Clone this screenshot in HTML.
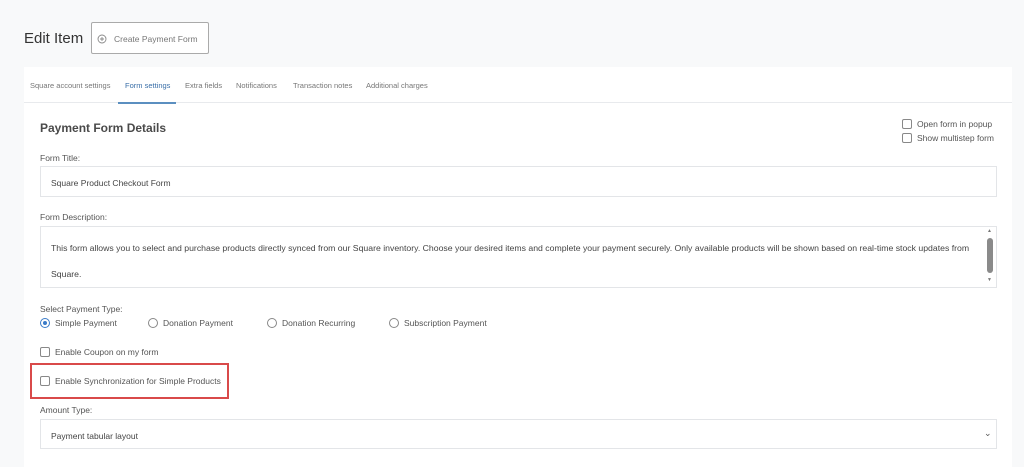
<!DOCTYPE html>
<html><head><style>
*{box-sizing:border-box;margin:0;padding:0}
body{width:1024px;height:465px;background:#f8f9fa;font-family:"Liberation Sans",sans-serif;color:#444;position:relative;overflow:hidden}
.a{position:absolute}
.panel{left:24px;top:67px;width:988px;height:400px;background:#fff}
.tabs{left:24px;top:67px;width:988px;height:36px;border-bottom:1px solid #e8eaed}
.tab{top:81px;font-size:7.5px;color:#777}
.lbl{font-size:8.5px;color:#555}
.inp{left:40px;width:957px;border:1px solid #e3e5e8;background:#fff;font-size:8.5px;color:#444}
.cb{width:10px;height:10px;border:1px solid #888;border-radius:2px;background:#fff}
.rd{width:10px;height:10px;border:1px solid #888;border-radius:50%;background:#fff}
</style></head><body>
<div class="a" style="left:24px;top:30px;font-size:15px;color:#333">Edit Item</div>
<div class="a" style="left:91px;top:22px;width:118px;height:32px;border:1px solid #aaa;background:#fff;border-radius:2px;font-size:8.5px;color:#777;padding:11px 0 0 22px">Create Payment Form</div>
<svg class="a" style="left:97px;top:34px" width="10" height="10" viewBox="0 0 10 10"><circle cx="5" cy="5" r="4" fill="none" stroke="#888" stroke-width="0.9"/><path d="M5 3v4M3 5h4" stroke="#888" stroke-width="0.9"/></svg>
<div class="a panel"></div>
<div class="a tabs"></div>
<div class="a tab" style="left:30px">Square account settings</div>
<div class="a tab" style="left:125px;color:#3a6fa8">Form settings</div>
<div class="a" style="left:118px;top:102px;width:58px;height:2px;background:#5b8fc0"></div>
<div class="a tab" style="left:185px">Extra fields</div>
<div class="a tab" style="left:236px">Notifications</div>
<div class="a tab" style="left:293px">Transaction notes</div>
<div class="a tab" style="left:366px">Additional charges</div>
<div class="a" style="left:40px;top:121px;font-size:12px;font-weight:bold;color:#4a4a4a">Payment Form Details</div>
<div class="a cb" style="left:902px;top:119px"></div><div class="a lbl" style="left:917px;top:119px">Open form in popup</div>
<div class="a cb" style="left:902px;top:133px"></div><div class="a lbl" style="left:917px;top:133px">Show multistep form</div>
<div class="a lbl" style="left:40px;top:153px">Form Title:</div>
<div class="a inp" style="top:166px;height:31px;padding:11px 10px">Square Product Checkout Form</div>
<div class="a lbl" style="left:40px;top:212px">Form Description:</div>
<div class="a inp" style="top:226px;height:62px;padding:8px 14px 0 10px;line-height:26px;font-size:8.7px">This form allows you to select and purchase products directly synced from our Square inventory. Choose your desired items and complete your payment securely. Only available products will be shown based on real-time stock updates from Square.</div>
<div class="a" style="left:987px;top:238px;width:6px;height:35px;background:#8a8a8a;border-radius:3px"></div>
<div class="a" style="left:987px;top:228px;font-size:5px;color:#777">▲</div>
<div class="a" style="left:987px;top:277px;font-size:5px;color:#777">▼</div>
<div class="a lbl" style="left:40px;top:304px">Select Payment Type:</div>
<div class="a rd" style="left:40px;top:318px;border-color:#3a7bc8"></div><div class="a" style="left:43px;top:321px;width:4px;height:4px;border-radius:50%;background:#3a7bc8"></div>
<div class="a lbl" style="left:55px;top:318px">Simple Payment</div>
<div class="a rd" style="left:148px;top:318px"></div><div class="a lbl" style="left:163px;top:318px">Donation Payment</div>
<div class="a rd" style="left:267px;top:318px"></div><div class="a lbl" style="left:282px;top:318px">Donation Recurring</div>
<div class="a rd" style="left:389px;top:318px"></div><div class="a lbl" style="left:404px;top:318px">Subscription Payment</div>
<div class="a cb" style="left:40px;top:347px"></div><div class="a lbl" style="left:55px;top:347px">Enable Coupon on my form</div>
<div class="a" style="left:30px;top:363px;width:199px;height:36px;border:2px solid #d94a4a"></div>
<div class="a cb" style="left:40px;top:376px"></div><div class="a lbl" style="left:55px;top:376px">Enable Synchronization for Simple Products</div>
<div class="a lbl" style="left:40px;top:405px">Amount Type:</div>
<div class="a inp" style="top:419px;height:30px;padding:11px 10px">Payment tabular layout</div>
<div class="a" style="left:984px;top:428px;font-size:9px;color:#555">⌄</div>
</body></html>
